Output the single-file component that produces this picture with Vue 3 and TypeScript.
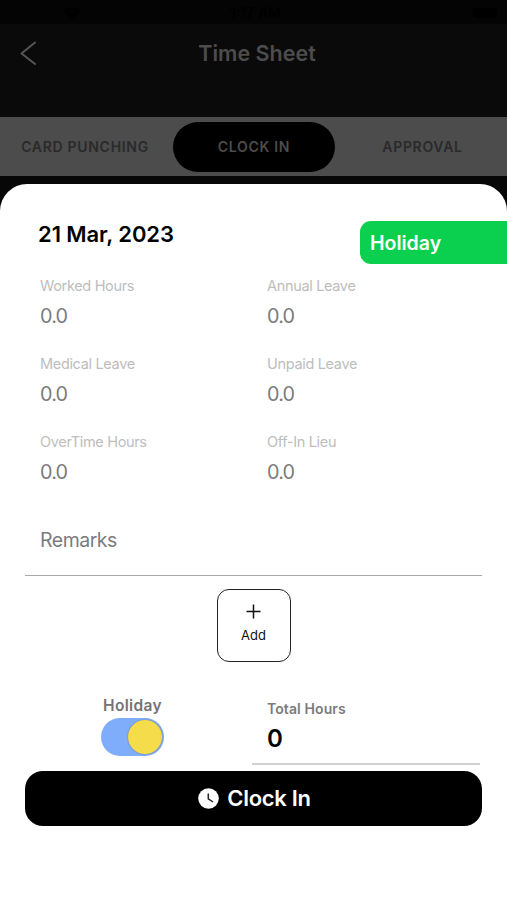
<script setup lang="ts">
import { ref } from 'vue'

interface Field {
  label: string
  value: string
}

const tabs: string[] = ['CARD PUNCHING', 'CLOCK IN', 'APPROVAL']
const activeTab = ref('CLOCK IN')
const holiday = ref(true)

const fields: Field[] = [
  { label: 'Worked Hours', value: '0.0' },
  { label: 'Annual Leave', value: '0.0' },
  { label: 'Medical Leave', value: '0.0' },
  { label: 'Unpaid Leave', value: '0.0' },
  { label: 'OverTime Hours', value: '0.0' },
  { label: 'Off-In Lieu', value: '0.0' },
]
</script>

<template>
  <div class="screen">
    <div class="status">
      <svg class="wifi" width="20" height="14" viewBox="0 0 20 14"><path d="M1 5Q10-3 19 5L10 13Z" /></svg>
      <span class="time">1:17 AM</span>
      <span class="battery"></span>
    </div>
    <header class="header">
      <svg class="back" width="18" height="26" viewBox="0 0 18 26">
        <path d="M15 2.5L1.5 13.5L15 24" />
      </svg>
      <h1 class="title">Time Sheet</h1>
    </header>
    <nav class="tabs">
      <button
        v-for="tab in tabs"
        :key="tab"
        class="tab"
        :class="{ active: tab === activeTab }"
        @click="activeTab = tab"
      >{{ tab }}</button>
    </nav>

    <main class="sheet">
      <div class="top">
        <h2 class="date">21 Mar, 2023</h2>
        <span class="badge">Holiday</span>
      </div>

      <section class="fields">
        <div v-for="field in fields" :key="field.label" class="field">
          <span class="label">{{ field.label }}</span>
          <span class="value">{{ field.value }}</span>
        </div>
      </section>

      <div class="remarks">Remarks</div>

      <button class="add">
        <svg width="15" height="15" viewBox="0 0 15 15"><path d="M7.5 .5V14.5M.5 7.5H14.5" /></svg>
        <span>Add</span>
      </button>

      <div class="summary">
        <div class="toggle-group">
          <span class="toggle-label">Holiday</span>
          <button class="toggle" :class="{ on: holiday }" aria-label="Holiday" @click="holiday = !holiday">
            <span class="knob"></span>
          </button>
        </div>
        <div class="total">
          <span class="total-label">Total Hours</span>
          <span class="total-value">0</span>
        </div>
      </div>

      <button class="clock-in">
        <svg width="21" height="21" viewBox="0 0 21 21">
          <circle cx="10.5" cy="10.5" r="10.3" fill="#fff" />
          <path d="M10.3 5.4V10.8L15 14" fill="none" stroke="#222" stroke-width="1.5" />
        </svg>
        <span>Clock In</span>
      </button>
    </main>
  </div>
</template>

<style>
body {
  background: #070707;
}
</style>

<style scoped>
.screen {
  display: flex;
  flex-direction: column;
  width: 507px;
  height: 900px;
  overflow: hidden;
  background: #070707;
  font-family: Inter, 'Liberation Sans', sans-serif;
}
button {
  border: 0;
  padding: 0;
  margin: 0;
  font-family: inherit;
  background: none;
}
.status {
  display: grid;
  grid-template-columns: 1fr auto 1fr;
  align-items: center;
  height: 24px;
  padding: 2px 10px 0 62px;
  box-sizing: border-box;
  background: #040404;
}
.wifi {
  fill: #010101;
}
.time {
  margin-right: 48px;
  font-size: 14px;
  font-weight: 600;
  line-height: 18px;
  color: #000;
}
.battery {
  justify-self: end;
  width: 24px;
  height: 10px;
  border-radius: 3px;
  background: #000;
}
.header {
  display: grid;
  grid-template-columns: 40px 1fr 40px;
  align-items: center;
  height: 93px;
  padding: 0 20px 35px;
  box-sizing: border-box;
  background: #0a0a0a;
}
.back {
  fill: none;
  stroke: #555;
  stroke-width: 2;
  stroke-linecap: round;
  stroke-linejoin: round;
}
.title {
  margin: 0 0 0 7px;
  text-align: center;
  font-size: 21.5px;
  font-weight: 600;
  line-height: 26px;
  color: #4c4c4c;
}
.tabs {
  display: grid;
  grid-template-columns: 170px 168px 169px;
  align-items: center;
  height: 59px;
  background: #4c4c4c;
}
.tab {
  height: 50px;
  border-radius: 25px;
  font-size: 14px;
  font-weight: 600;
  letter-spacing: 0.7px;
  color: #2a2a2a;
}
.tab.active {
  width: 162px;
  justify-self: center;
  background: #000;
  color: #4c4c4c;
}
.sheet {
  display: flex;
  flex-direction: column;
  height: 716px;
  margin-top: 8px;
  border-radius: 27px 27px 0 0;
  background: #fff;
}
.top {
  display: flex;
  justify-content: space-between;
  height: 80px;
  padding-left: 38px;
}
.date {
  margin: 37px 0 0;
  font-size: 22px;
  font-weight: 600;
  letter-spacing: -0.08px;
  line-height: 27px;
  color: #000;
}
.badge {
  width: 147px;
  height: 43px;
  margin-top: 37px;
  padding-left: 10px;
  box-sizing: border-box;
  border-radius: 11px 0 0 11px;
  background: #0bd04f;
  font-size: 19.5px;
  font-weight: 600;
  line-height: 44px;
  color: #fff;
}
.fields {
  display: grid;
  grid-template-columns: 227px 1fr;
  grid-auto-rows: 78px;
  margin-top: 12px;
  padding-left: 40px;
}
.field {
  display: flex;
  flex-direction: column;
}
.label {
  font-size: 14.5px;
  letter-spacing: -0.33px;
  line-height: 20px;
  color: #bdbdbd;
}
.value {
  margin-top: 7px;
  font-size: 19.8px;
  letter-spacing: -0.8px;
  line-height: 26px;
  color: #7b7b7b;
}
.remarks {
  height: 49px;
  margin: 16px 25px 0;
  padding-left: 15px;
  border-bottom: 1px solid #aaa;
  font-size: 19.5px;
  letter-spacing: -0.5px;
  line-height: 28px;
  color: #7b7b7b;
}
.add {
  display: flex;
  flex-direction: column;
  align-items: center;
  align-self: center;
  width: 74px;
  height: 73px;
  margin-top: 13px;
  padding-top: 14px;
  box-sizing: border-box;
  border: 1.5px solid #222;
  border-radius: 12px;
  font-size: 13px;
  line-height: 18px;
  color: #111;
}
.add svg {
  flex: none;
  margin-bottom: 7px;
  stroke: #111;
  stroke-width: 1.5;
}
.summary {
  display: flex;
  justify-content: space-between;
  height: 103px;
  padding: 1px 27px 0 101px;
  box-sizing: border-box;
}
.toggle-group {
  display: flex;
  flex-direction: column;
  padding-top: 32px;
}
.toggle-label {
  padding-left: 2px;
  font-size: 15.5px;
  font-weight: 600;
  letter-spacing: 0.35px;
  line-height: 21px;
  color: #737373;
}
.toggle {
  display: flex;
  align-items: center;
  width: 63px;
  height: 38px;
  margin-top: 2px;
  padding: 0 2px;
  border-radius: 19px;
  background: #ccc;
}
.toggle.on {
  justify-content: flex-end;
  background: #80adfb;
}
.knob {
  width: 34px;
  height: 34px;
  border-radius: 50%;
  background: #f5dc4a;
  box-shadow: 0 0 2px #6d7c78;
}
.total {
  display: flex;
  flex-direction: column;
  width: 228px;
  height: 102px;
  padding: 37px 0 0 15px;
  box-sizing: border-box;
  border-bottom: 2px solid #d2d2d2;
}
.total-label {
  font-size: 14px;
  font-weight: 600;
  letter-spacing: 0.1px;
  line-height: 18px;
  color: #7b7b7b;
}
.total-value {
  margin-top: 6px;
  font-size: 24px;
  font-weight: 600;
  line-height: 30px;
  color: #000;
}
.clock-in {
  display: flex;
  align-items: center;
  justify-content: center;
  gap: 8px;
  height: 55px;
  margin: 6px 25px 0;
  padding: 0 0 1px 2px;
  border-radius: 18px;
  background: #000;
  font-size: 22px;
  font-weight: 600;
  letter-spacing: -0.3px;
  color: #fff;
}
</style>
